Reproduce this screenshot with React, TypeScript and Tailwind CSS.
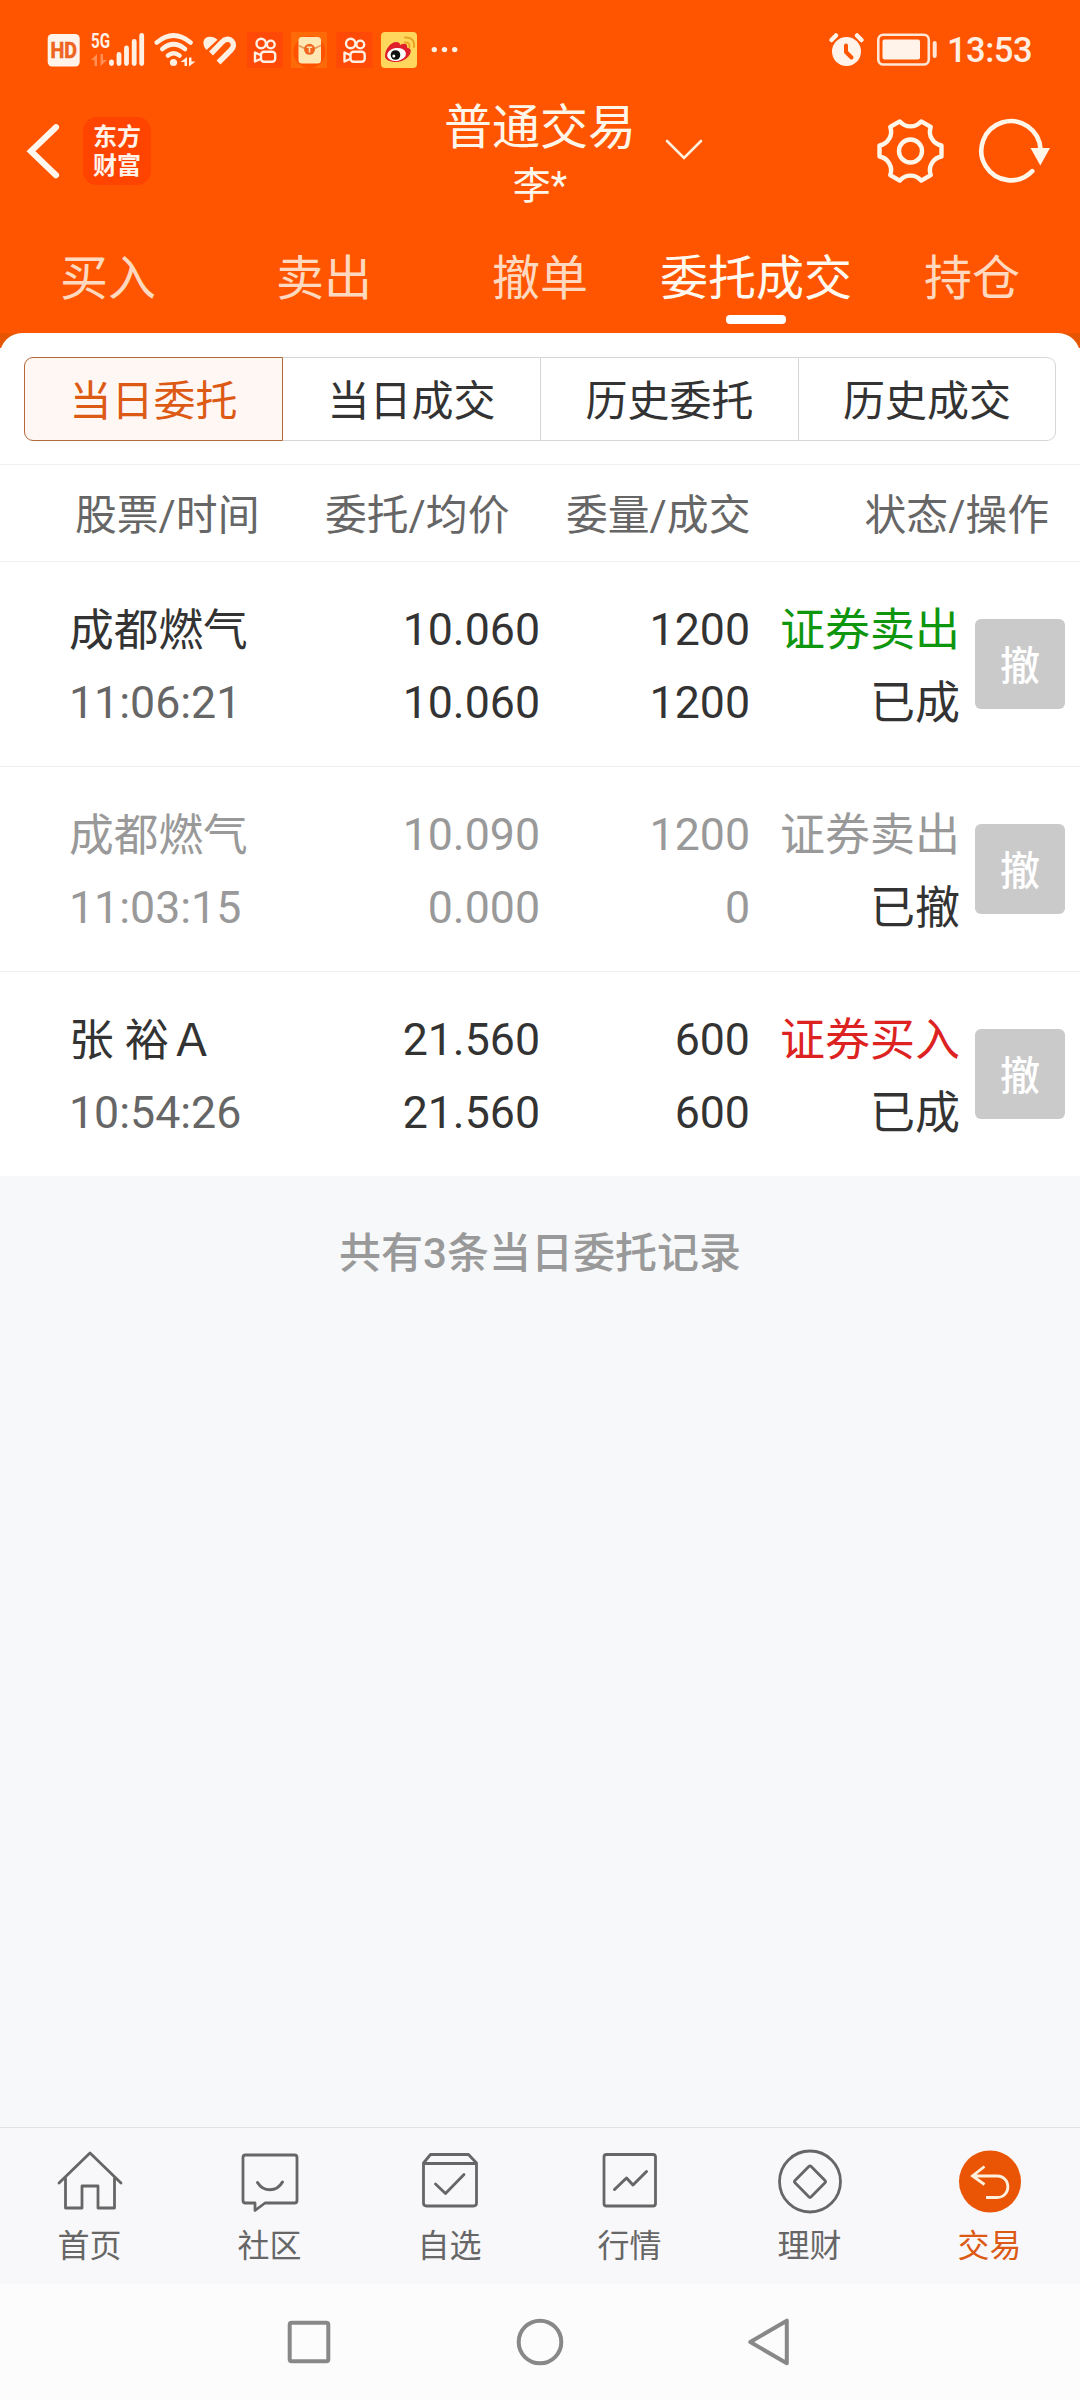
import React from "react";

const FONT = "font-['Roboto','Noto_Sans_CJK_SC',sans-serif]";

function SignalIcons() {
  return (
    <svg className="h-[40px] w-[430px]" viewBox="40 30 430 40" fill="none">
      <rect x="47.7" y="34" width="32" height="32.5" rx="4.5" fill="#fff3ea" />
      <text x="63.7" y="58.2" fontSize="21.5" fontWeight="700" textAnchor="middle" textLength="26.5" lengthAdjust="spacingAndGlyphs" fill="#ee6420" stroke="#ee6420" strokeWidth="0.6">HD</text>
      <text x="91" y="47.5" fontSize="20" fontWeight="700" textLength="19" lengthAdjust="spacingAndGlyphs" fill="#fff0e4">5G</text>
      <g fill="#ff8f55">
        <path d="M91 60 L97 54 V66 H94.5 V60Z" />
        <path d="M107 60 L100.500 66 V54 H103 V60Z" />
      </g>
      <g stroke="#fff0e4" strokeWidth="4.8" strokeLinecap="round">
        <path d="M111.500 61.800V63.500M119 54.500V63.500M126.500 48V63.500M134.200 41.500V63.500M141.700 35.500V63.500" />
      </g>
      <g stroke="#fff0e4" strokeWidth="4.600" strokeLinecap="round">
        <path d="M156.800 42.500Q173.500 28.500 190.500 42.500" />
        <path d="M162.300 49Q173.500 39.500 185 49" />
        <path d="M168 55.500Q173.500 51 179.500 55.500" />
      </g>
      <circle cx="173.500" cy="62.500" r="3.600" fill="#fff0e4" />
      <path d="M180.500 62L187 57V66H184.500V62ZM195.500 61.500L189 66.500V57.500H191.500V61.500Z" fill="#fff0e4" />
      <path d="M206.500 50C201.500 45 202.500 36.800 210 36.800C213 36.800 215.500 38 217.500 39.800Z" fill="#fff0e4" />
      <path d="M211 53.500L222 42.200C225.500 38.500 229.500 38.500 231.800 41C234.200 43.500 234 47 231 50L218.500 62.500" stroke="#fff0e4" strokeWidth="5.400" strokeLinejoin="round" />

      <KwaiTile x={247} />
      <rect x="291" y="32" width="36" height="36" fill="#ff6a08" />
      <circle cx="309.500" cy="52" r="16" fill="#ff5200" />
      <rect x="298.500" y="37" width="22.500" height="26.500" rx="3.500" fill="#ffe7b4" />
      <path d="M298.500 45.500Q309.500 52.500 321 45.500" stroke="#e79c5a" strokeWidth="1.500" />
      <circle cx="309.500" cy="49.300" r="5.500" fill="#f0661f" />
      <path d="M306.800 47.200H312.200M309.500 47.200V52.500" stroke="#ffe2b0" strokeWidth="1.500" />
      <KwaiTile x={336.500} />

      <rect x="381" y="32" width="36" height="36" rx="4" fill="#ffd75c" />
      <path d="M385 56C385 49 391 42 396 42C399 42 400 43 400 45C404 43 408 43 407 47.500C411 48.500 411.500 50.500 410 54C407 60 400 62.500 394 62C389 61.500 385 59.500 385 56Z" fill="#df1f2b" />
      <ellipse cx="396.500" cy="54.500" rx="9.500" ry="6.500" fill="#fff" transform="rotate(-8 396.500 54.500)" />
      <circle cx="395.500" cy="55" r="4.800" fill="#111" />
      <circle cx="393.800" cy="56" r="1.500" fill="#fff" />
      <path d="M405 42.500Q410 42 409.500 47M405 37.500Q415 37 414 47" stroke="#e9a425" strokeWidth="2" strokeLinecap="round" />
      <g fill="#fff0e4">
        <circle cx="434.300" cy="49.600" r="2.700" />
        <circle cx="444.500" cy="49.600" r="2.700" />
        <circle cx="454.700" cy="49.600" r="2.700" />
      </g>
    </svg>
  );
}

function KwaiTile({ x }: { x: number }) {
  return (
    <g transform={`translate(${x} 32)`}>
      <rect width="36" height="36" fill="#ff4906" />
      <g stroke="#fff0e4" strokeWidth="2.400" fill="none">
        <circle cx="14.200" cy="11.500" r="4.700" />
        <circle cx="23.800" cy="12.500" r="3.900" />
        <rect x="14" y="19.800" width="14.200" height="10" rx="3" />
        <path d="M13.500 23L8 20.500V29.500L13.500 27" strokeLinejoin="round" />
      </g>
    </g>
  );
}

function StatusBar() {
  return (
    <div className="flex h-[100px] items-start justify-between pl-10 pr-[48px] pt-[30px]">
      <SignalIcons />
      <div className="flex h-[40px] items-center">
        <svg className="h-[40px] w-[122px]" viewBox="825 30 122 40" fill="none">
          <circle cx="846.500" cy="51.500" r="14.500" fill="#fff3ea" />
          <path d="M831.500 40L836 35.500M861.500 40L857 35.500" stroke="#fff3ea" strokeWidth="4.500" strokeLinecap="round" />
          <path d="M846 45.500V52L851.500 57.500" stroke="#ff5500" strokeWidth="4" strokeLinecap="round" strokeLinejoin="round" />
          <rect x="878.300" y="34.700" width="50.500" height="29.800" rx="5" stroke="#ffe6d6" strokeWidth="2.600" />
          <rect x="882.500" y="39.500" width="37.500" height="20" rx="2" fill="#fff3ea" />
          <rect x="932.700" y="41" width="4" height="17" rx="2" fill="#ffe6d6" />
        </svg>
        <span className="w-[85px] whitespace-nowrap text-[34.500px] font-medium leading-[40px] tracking-[-0.5px] text-[#ffeee2]">13:53</span>
      </div>
    </div>
  );
}

function TitleBar() {
  return (
    <div className="flex h-[123px] items-start justify-between px-6">
      <div className="flex w-[320px] items-center pt-[17px]">
        <svg className="h-[68px] w-[40px]" viewBox="24 117 40 68" fill="none">
          <path d="M56 127.200L31 151.200L56 175.200" stroke="#fff6ee" strokeWidth="6.200" strokeLinecap="round" strokeLinejoin="miter" />
        </svg>
        <div className="ml-[19px] flex size-[68px] flex-col items-center justify-center rounded-[14px] bg-[#ff4400] pt-[2px] text-center text-[24px] font-bold leading-[29px] text-[#fff3ea]">
          <span>东方</span>
          <span>财富</span>
        </div>
      </div>
      <div className="relative flex flex-col items-center">
        <span className="text-[48px] leading-[56px] text-[#fff6ea]">普通交易</span>
        <span className="pt-[2px] text-[38px] leading-[56px] text-[#fff6ea]">李*</span>
        <svg className="absolute left-[220px] top-[37px] h-[26px] w-[40px]" viewBox="664 137 40 26" fill="none">
          <path d="M667 141L684 158L701 141" stroke="#fff0e0" strokeWidth="2.600" strokeLinecap="round" />
        </svg>
      </div>
      <div className="flex w-[320px] justify-end pt-[13px]">
        <svg className="h-[76px] w-[180px]" viewBox="876 113 180 76" fill="none" stroke="#fff6ea">
          <g transform="translate(910.500 151)" strokeWidth="4.400" strokeLinejoin="round">
            <circle r="11.500" />
            <path d="M31 5.500A14 14 0 0 0 20.260 24.100L10.740 29.600A14 14 0 0 0 -10.740 29.600L-20.260 24.100A14 14 0 0 0 -31 5.500V-5.500A14 14 0 0 0 -20.260 -24.100L-10.740 -29.600A14 14 0 0 0 10.740 -29.600L20.260 -24.100A14 14 0 0 0 31 -5.500Z" />
          </g>
          <path d="M1040.500 149A29.600 29.600 0 1 0 1032.300 171.200" strokeWidth="4.600" strokeLinecap="round" />
          <path d="M1030.500 148H1050L1040.300 165.500Z" fill="#fff6ea" stroke="none" />
        </svg>
      </div>
    </div>
  );
}

const tabs = ["买入", "卖出", "撤单", "委托成交", "持仓"];

function TradeTabs() {
  return (
    <nav className="grid h-[110px] grid-cols-5">
      {tabs.map((t) => {
        const active = t === "委托成交";
        return (
          <div key={t} className="flex flex-col items-center pt-[24px]">
            <span className={active ? "text-[48px] leading-[64px] text-[#fffaf0]" : "text-[48px] leading-[64px] text-[#ffd9bf]"}>{t}</span>
            {active && <span className="mt-[4px] h-[9px] w-[60px] rounded-[4px] bg-white" />}
          </div>
        );
      })}
    </nav>
  );
}

const segments = ["当日成交", "历史委托", "历史成交"];

function Segments() {
  return (
    <div className="bg-[#e65500]">
      <div className="h-[15px] overflow-hidden">
        <div className="h-[40px] rounded-t-[22px] bg-white" />
      </div>
      <div className="h-[116px] bg-white px-6 pt-[9px]">
        <div className="grid h-[84px] grid-cols-[259px_258px_258px_257px] text-[42px] text-[#333333]">
          <div className="flex items-center justify-center rounded-l-[9px] border border-[#b5683a] bg-[#fff7f4] pt-[5px] text-[#dc5a14]">
            <span className="leading-[60px]">当日委托</span>
          </div>
          {segments.map((s) => (
            <div key={s} className="flex items-center justify-center border border-l-0 border-[#d6d6d6] pt-[5px] last:rounded-r-[9px]">
              <span className="leading-[60px]">{s}</span>
            </div>
          ))}
        </div>
      </div>
    </div>
  );
}

function ColumnHeads() {
  return (
    <div className="flex h-[98px] items-center border-y border-[#f0f0f0] bg-white pl-[75px] pr-[31px] pt-[5px] text-[41.800px] leading-[60px] text-[#666666]">
      <span className="w-[250px]">股票/时间</span>
      <span className="w-[241px]">委托/均价</span>
      <span className="flex-1">委量/成交</span>
      <span>状态/操作</span>
    </div>
  );
}

type Order = {
  name: string;
  time: string;
  price: string;
  avg: string;
  qty: string;
  filled: string;
  side: string;
  state: string;
  tone: string;
  sideTone: string;
  timeTone: string;
};

const orders: Order[] = [
  { name: "成都燃气", time: "11:06:21", price: "10.060", avg: "10.060", qty: "1200", filled: "1200", side: "证券卖出", state: "已成", tone: "text-[#333333]", sideTone: "text-[#0f960f]", timeTone: "text-[#666666]" },
  { name: "成都燃气", time: "11:03:15", price: "10.090", avg: "0.000", qty: "1200", filled: "0", side: "证券卖出", state: "已撤", tone: "text-[#999999]", sideTone: "text-[#999999]", timeTone: "text-[#999999]" },
  { name: "张 裕Ａ", time: "10:54:26", price: "21.560", avg: "21.560", qty: "600", filled: "600", side: "证券买入", state: "已成", tone: "text-[#333333]", sideTone: "text-[#dd2222]", timeTone: "text-[#666666]" },
];

function OrderRow({ o }: { o: Order }) {
  return (
    <div className="flex h-[205px] border-b border-[#ededed] bg-white pl-[69px] pr-[15px] pt-[32px] text-[44.700px] leading-[73px] last:h-[204px] last:border-0">
      <div className={`flex w-[231px] flex-col ${o.tone}`}>
        <span className="-mb-px pt-px">{o.name}</span>
        <span className={o.timeTone}>{o.time}</span>
      </div>
      <div className={`flex w-[240px] flex-col text-right ${o.tone}`}>
        <span>{o.price}</span>
        <span>{o.avg}</span>
      </div>
      <div className={`flex w-[210px] flex-col text-right ${o.tone}`}>
        <span>{o.qty}</span>
        <span>{o.filled}</span>
      </div>
      <div className="flex w-[210px] flex-col text-right text-[45px] text-[#333333]">
        <span className={o.sideTone}>{o.side}</span>
        <span>{o.state}</span>
      </div>
      <button className="ml-auto mt-[25px] flex size-[90px] items-center justify-center rounded-[6px] bg-[#cacaca] pt-[5px] text-[40px] font-medium leading-[60px] text-white">
        撤
      </button>
    </div>
  );
}

function NavIcon({ kind }: { kind: string }) {
  return (
    <svg className="size-[66px]" viewBox="-33 -33 66 66" fill="none" stroke="#666666" strokeWidth="2.800" strokeLinecap="round" strokeLinejoin="round">
      {kind === "首页" && (
        <path d="M-31 1L0 -29L31 1M-24.500 -4V26H-8V4H8V26H24.500V-4" />
      )}
      {kind === "社区" && (
        <>
          <path d="M-24.500 -27H24.500Q27 -27 27 -24.500V18.500Q27 21 24.500 21H-5L-15 28.500V21H-24.500Q-27 21 -27 18.500V-24.500Q-27 -27 -24.500 -27Z" />
          <path d="M-12.500 0.500Q-8 7.800 0 7.800T12.500 0" strokeWidth="3" />
        </>
      )}
      {kind === "自选" && (
        <>
          <path d="M-26.500 -19L-19.500 -27.500H18.500L26.500 -19V21Q26.500 24 23.500 24H-23.500Q-26.500 24 -26.500 21ZM-26.500 -18.500H26.500" />
          <path d="M-14.500 2L-4.500 11.500L14 -7.500" />
        </>
      )}
      {kind === "行情" && (
        <>
          <rect x="-26" y="-27.500" width="51.500" height="51.500" rx="2.500" />
          <path d="M-15.500 7.500L-3.500 -4L3 3L16.500 -10.500" strokeWidth="3" />
        </>
      )}
      {kind === "理财" && (
        <>
          <circle cx="0" cy="-0.500" r="30.500" />
          <path d="M-1.200 -15.500Q0 -16.700 1.200 -15.500L15 -1.500Q16.200 -0.400 15 0.800L1.200 14.800Q0 16 -1.200 14.800L-15 0.800Q-16.200 -0.400 -15 -1.500Z" />
        </>
      )}
      {kind === "交易" && (
        <>
          <circle cx="0" cy="-0.500" r="31" fill="#e95504" stroke="none" />
          <path d="M-5.500 -15.500L-17.500 -6L-5.500 2.500M-17 -6H7C21.500 -6 21.500 15.500 7 15.500H-4" stroke="#fff0de" strokeLinecap="butt" strokeLinejoin="miter" />
        </>
      )}
    </svg>
  );
}

const navItems = ["首页", "社区", "自选", "行情", "理财", "交易"];

export default function App() {
  return (
    <div className={`flex h-[2400px] w-[1080px] flex-col overflow-hidden bg-[#f7f8fa] ${FONT}`}>
      <header className="bg-[#ff5500]">
        <StatusBar />
        <TitleBar />
        <TradeTabs />
      </header>
      <Segments />
      <ColumnHeads />
      <div>
        {orders.map((o) => (
          <OrderRow key={o.time} o={o} />
        ))}
      </div>
      <p className="pt-[48px] text-center text-[42px] font-medium leading-[60px] text-[#999999]">共有3条当日委托记录</p>

      <nav className="mt-auto grid h-[157px] grid-cols-6 border-t border-[#e2e2e4] bg-[#f8f8fa]">
        {navItems.map((n) => (
          <div key={n} className="flex flex-col items-center pr-px pt-[21px]">
            <NavIcon kind={n} />
            <span className={n === "交易" ? "mt-[9px] text-[32px] leading-[44px] text-[#dc5a14]" : "mt-[9px] text-[32px] leading-[44px] text-[#666666]"}>{n}</span>
          </div>
        ))}
      </nav>
      <div className="flex h-[116px] items-center justify-center gap-[181px] bg-[#fcfcfc]">
        <svg className="size-[50px]" viewBox="-25 -25 50 50" fill="none" stroke="#888888" strokeWidth="4">
          <rect x="-19.300" y="-19.300" width="38.600" height="38.600" rx="2" />
        </svg>
        <svg className="size-[50px]" viewBox="-25 -25 50 50" fill="none" stroke="#888888" strokeWidth="4">
          <circle r="21.300" />
        </svg>
        <svg className="size-[50px]" viewBox="-25 -25 50 50" fill="none" stroke="#888888" strokeWidth="4" strokeLinejoin="round">
          <path d="M15.800 -21.300V21.300L-20.700 0Z" />
        </svg>
      </div>
    </div>
  );
}
